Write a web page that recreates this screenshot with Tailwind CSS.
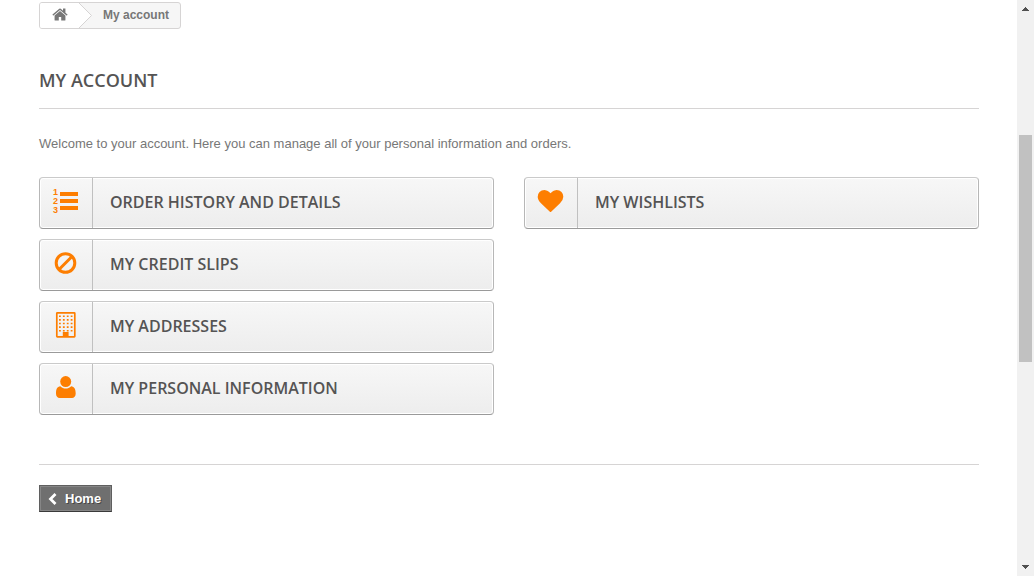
<!DOCTYPE html>
<html lang="en">
<head>
<meta charset="utf-8">
<meta name="viewport" content="width=device-width, initial-scale=1">
<title>My account</title>
<script src="https://cdn.jsdelivr.net/npm/@tailwindcss/browser@4"></script>
</head>
<body class="flex min-h-screen bg-white font-['Liberation_Sans',Arial,sans-serif] text-[13px] leading-[18px] text-[#777777]">
<main class="min-w-0 flex-1 pt-0.5 pr-[38px] pb-16 pl-[39px]">
  <nav aria-label="Breadcrumb" class="inline-flex h-[27px] overflow-hidden rounded-[3px] border border-[#d6d4d4] bg-[#f6f6f6] align-top text-xs font-bold leading-6">
    <a href="#" aria-label="Home page" class="flex w-[39px] justify-center bg-white pt-[5px]">
      <svg class="h-[13px] w-4" viewBox="50 200 1692 1380" fill="#777777" aria-hidden="true"><path d="M1472 992v480q0 26-19 45t-45 19h-384v-384h-256v384h-384q-26 0-45-19t-19-45v-480q0-1 .5-3t.5-3l575-474 575 474q1 2 1 6zm223-69l-62 74q-8 9-21 11h-3q-13 0-21-7l-692-577-692 577q-12 8-24 7-13-2-21-11l-62-74q-8-10-7-23.500t11-21.500l719-599q32-26 76-26t76 26l244 204v-195q0-14 9-23t23-9h192q14 0 23 9t9 23v408l219 182q10 8 11 21.500t-7 23.500z"/></svg>
    </a>
    <svg class="h-[25px] w-[13px]" viewBox="0 0 13 25" aria-hidden="true"><path d="M0 0L12.500 12.500L0 25Z" fill="#fff"/><path d="M0 0L12.500 12.500L0 25" fill="none" stroke="#d6d4d4"/></svg>
    <span class="pr-[11px] pl-[11px]">My account</span>
  </nav>

  <h1 class="mt-10 border-b border-[#d6d4d4] pb-[17px] font-['Open_Sans',sans-serif] text-lg leading-[22px] font-semibold text-[#555454] uppercase">My account</h1>
  <p class="mt-[26px]">Welcome to your account. Here you can manage all of your personal information and orders.</p>

  <div class="mt-6 grid grid-cols-2 items-start gap-x-[30px] font-['Open_Sans',sans-serif] text-base font-semibold text-[#555454] uppercase">
    <ul class="flex flex-col gap-2.5">
      <li><a href="#" class="flex h-[52px] rounded-[4px] border border-[#cacaca] border-x-[#b7b7b7] border-b-[#9a9a9a] bg-linear-to-b from-[#f7f7f7] to-[#ededed] inset-ring inset-ring-white">
        <span class="flex w-[53px] shrink-0 justify-center border-r border-[#c0c0c0] pt-[9px]"><svg class="size-7 overflow-visible" viewBox="0 0 28 28" fill="#fd7e01" aria-hidden="true"><path d="M8 5h18v4H8zM8 12h18v4H8zM8 19h18v4H8z"/><g class="font-['Liberation_Sans',sans-serif] text-[9px] font-bold"><text x="1" y="8">1</text><text x="1" y="17">2</text><text x="1" y="26">3</text></g></svg></span>
        <span class="pl-[17px] leading-[48px]">Order history and details</span></a></li>
      <li><a href="#" class="flex h-[52px] rounded-[4px] border border-[#cacaca] border-x-[#b7b7b7] border-b-[#9a9a9a] bg-linear-to-b from-[#f7f7f7] to-[#ededed] inset-ring inset-ring-white">
        <span class="flex w-[53px] shrink-0 justify-center border-r border-[#c0c0c0] pt-[9px]"><svg class="size-7" viewBox="0 0 28 28" fill="none" stroke="#fd7e01" stroke-width="3" aria-hidden="true"><circle cx="13.500" cy="14" r="9.300"/><path d="M7 20.500L20 7.500"/></svg></span>
        <span class="pl-[17px] leading-[48px]">My credit slips</span></a></li>
      <li><a href="#" class="flex h-[52px] rounded-[4px] border border-[#cacaca] border-x-[#b7b7b7] border-b-[#9a9a9a] bg-linear-to-b from-[#f7f7f7] to-[#ededed] inset-ring inset-ring-white">
        <span class="flex w-[53px] shrink-0 justify-center border-r border-[#c0c0c0] pt-[9px]"><svg class="size-7" viewBox="0 0 28 28" aria-hidden="true"><rect x="4.800" y="1.800" width="18" height="24" rx=".5" fill="none" stroke="#fd7e01" stroke-width="1.700"/><path d="M7 5.300H21.500M7 8.900H21.500M7 12.500H21.500M7 16.100H21.500M7 19.700H21.500" stroke="#fd7e01" stroke-width="1.600" stroke-dasharray="1.800 2.100" fill="none"/><path d="M10.800 21h5.800v5h-5.800z" fill="#fd7e01"/></svg></span>
        <span class="pl-[17px] leading-[48px]">My addresses</span></a></li>
      <li><a href="#" class="flex h-[52px] rounded-[4px] border border-[#cacaca] border-x-[#b7b7b7] border-b-[#9a9a9a] bg-linear-to-b from-[#f7f7f7] to-[#ededed] inset-ring inset-ring-white">
        <span class="flex w-[53px] shrink-0 justify-center border-r border-[#c0c0c0] pt-[9px]"><svg class="size-7" viewBox="0 0 28 28" fill="#fd7e01" aria-hidden="true"><circle cx="13.700" cy="8.600" r="5.500"/><path d="M8.300 13.200C11.500 16.300 16 16.300 19.200 13.200C22.200 13.500 23.700 16 23.700 20.500C23.700 23.300 22 25 20 25H7.600C5.600 25 4 23.300 4 20.500C4 16 5.300 13.500 8.300 13.200Z"/></svg></span>
        <span class="pl-[17px] leading-[48px]">My personal information</span></a></li>
    </ul>
    <ul>
      <li><a href="#" class="flex h-[52px] rounded-[4px] border border-[#cacaca] border-x-[#b7b7b7] border-b-[#9a9a9a] bg-linear-to-b from-[#f7f7f7] to-[#ededed] inset-ring inset-ring-white">
        <span class="flex w-[53px] shrink-0 justify-center border-r border-[#c0c0c0] pt-[9px]"><svg class="size-7" viewBox="-50 -90 1960 1960" fill="#fd7e01" aria-hidden="true"><path d="M896 1664q-26 0-44-18l-624-602q-10-8-27.500-26t-55.500-65.500-68-97.500-53.500-121-23.500-138q0-220 127-344t351-124q62 0 126.500 21.500t120 58 95.500 68.500 76 68q36-36 76-68t95.500-68.500 120-58 126.500-21.500q224 0 351 124t127 344q0 221-229 450l-623 600q-18 18-44 18z"/></svg></span>
        <span class="pl-[17px] leading-[48px]">My wishlists</span></a></li>
    </ul>
  </div>

  <div class="mt-[49px] border-t border-[#d6d4d4] pt-5">
    <a href="#" class="inline-flex h-[27px] items-center gap-2 border border-[#5f5f5f] border-b-[#3a3a3a] bg-[#6f6f6f] pr-2.5 pl-2 align-top font-bold text-white inset-ring inset-ring-[#868686] text-shadow-[1px_1px_rgba(0,0,0,0.4)]">
      <svg class="h-3 w-[9px]" viewBox="0 0 9 12" fill="none" stroke="#fff" stroke-width="2.800" aria-hidden="true"><path d="M7.500 1L2.500 6L7.500 11"/></svg>Home</a>
  </div>
</main>

<!-- Scroll track -->
<div class="flex w-[17px] shrink-0 flex-col items-center bg-[#f1f1f1]" aria-hidden="true">
  <svg class="mt-[7px] h-1 w-[7px]" viewBox="0 0 7 4" fill="#505050" shape-rendering="crispEdges"><path d="M3 0h1v1h1v1h1v1h1v1H0V3h1V2h1V1h1z"/></svg>
  <div class="mt-[124px] h-[227px] w-[13px] bg-[#c1c1c1]"></div>
  <svg class="mt-auto mb-[7px] h-1 w-[7px]" viewBox="0 0 7 4" fill="#505050" shape-rendering="crispEdges"><path d="M0 0h7v1H6v1H5v1H4v1H3V3H2V2H1V1H0z"/></svg>
</div>
</body>
</html>
